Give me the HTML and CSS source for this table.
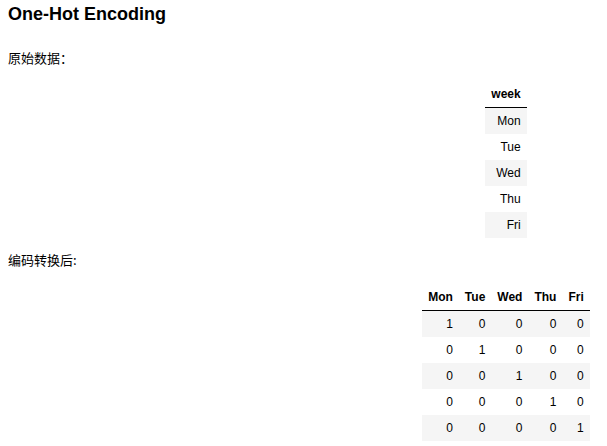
FILE: index.html
```html
<!DOCTYPE html>
<html lang="zh">
<head>
<meta charset="utf-8">
<title>One-Hot Encoding</title>
<link rel="stylesheet" href="styles.css">
</head>
<body>
<main class="page">
  <h1 class="title">One-Hot Encoding</h1>
  <p class="label label-first">原始数据：</p>
  <div class="output">
    <table class="dataframe">
      <thead><tr><th>week</th></tr></thead>
      <tbody>
        <tr><td>Mon</td></tr>
        <tr><td>Tue</td></tr>
        <tr><td>Wed</td></tr>
        <tr><td>Thu</td></tr>
        <tr><td>Fri</td></tr>
      </tbody>
    </table>
  </div>
  <p class="label label-second">编码转换后:</p>
  <div class="output output-second">
    <table class="dataframe">
      <thead><tr><th>Mon</th><th>Tue</th><th>Wed</th><th>Thu</th><th>Fri</th></tr></thead>
      <tbody>
        <tr><td>1</td><td>0</td><td>0</td><td>0</td><td>0</td></tr>
        <tr><td>0</td><td>1</td><td>0</td><td>0</td><td>0</td></tr>
        <tr><td>0</td><td>0</td><td>1</td><td>0</td><td>0</td></tr>
        <tr><td>0</td><td>0</td><td>0</td><td>1</td><td>0</td></tr>
        <tr><td>0</td><td>0</td><td>0</td><td>0</td><td>1</td></tr>
      </tbody>
    </table>
  </div>
</main>
</body>
</html>
```
FILE: styles.css
```css
html, body {
  margin: 0;
  padding: 0;
  background: #ffffff;
}
body {
  font-family: "Liberation Sans", Arial, "Noto Sans CJK SC", sans-serif;
  color: #000000;
}
.page {
  display: flex;
  flex-direction: column;
  padding: 4px 8px 0 8px;
}
.title {
  margin: 0;
  font-size: 18px;
  font-weight: bold;
  line-height: 20px;
}
.label {
  margin: 0;
  font-family: "Noto Sans CJK SC", "Liberation Sans", sans-serif;
  font-size: 13px;
  line-height: 18px;
}
.label-first {
  margin-top: 25px;
}
.label-second {
  margin-top: 13px;
}
.output {
  width: 180px;
  margin-left: 408px;
  display: flex;
  justify-content: center;
  margin-top: 14px;
}
.output-second {
  margin-top: 15px;
}
.dataframe {
  border-collapse: collapse;
  border-spacing: 0;
  font-size: 12px;
  font-family: "Liberation Sans", Arial, sans-serif;
}
.dataframe th {
  font-weight: bold;
  text-align: right;
  padding: 6px 6px;
  line-height: 14px;
  border-bottom: 1px solid #000000;
}
.dataframe td {
  text-align: right;
  padding: 6px 6px;
  line-height: 14px;
}
.dataframe tbody tr:nth-child(odd) {
  background: #f5f5f5;
}
```
